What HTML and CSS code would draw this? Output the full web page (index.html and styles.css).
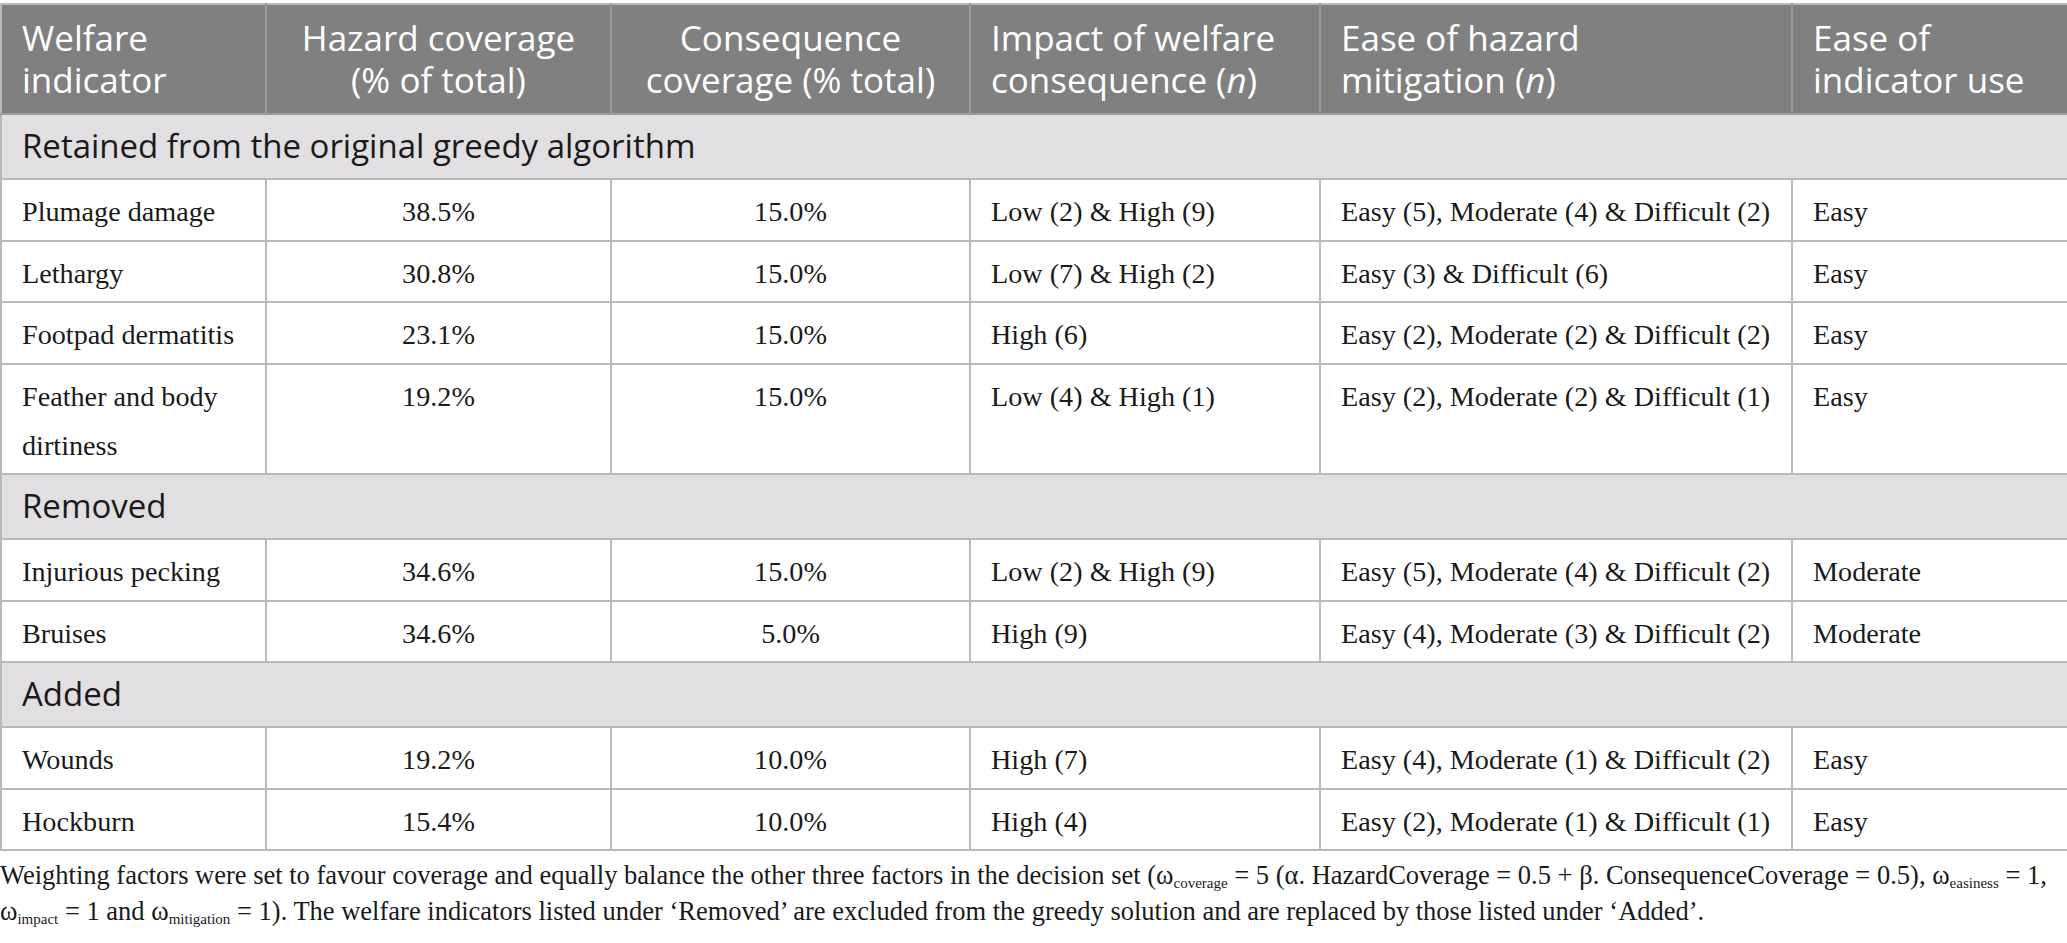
FILE: index.html
```html
<!DOCTYPE html>
<html lang="en">
<head>
<meta charset="utf-8">
<title>Welfare indicators</title>
<link rel="stylesheet" href="styles.css">
</head>
<body>
<div class="wrap">
<table class="tbl">
  <colgroup>
    <col class="c1"><col class="c2"><col class="c3"><col class="c4"><col class="c5"><col class="c6">
  </colgroup>
  <thead>
    <tr>
      <th>Welfare<br>indicator</th>
      <th class="ctr">Hazard coverage<br>(% of total)</th>
      <th class="ctr">Consequence<br>coverage (% total)</th>
      <th>Impact of welfare<br>consequence (<i>n</i>)</th>
      <th>Ease of hazard<br>mitigation (<i>n</i>)</th>
      <th>Ease of<br>indicator use</th>
    </tr>
  </thead>
  <tbody>
    <tr class="band"><td colspan="6">Retained from the original greedy algorithm</td></tr>
    <tr><td>Plumage damage</td><td class="ctr">38.5%</td><td class="ctr">15.0%</td><td>Low (2) &amp; High (9)</td><td>Easy (5), Moderate (4) &amp; Difficult (2)</td><td>Easy</td></tr>
    <tr><td>Lethargy</td><td class="ctr">30.8%</td><td class="ctr">15.0%</td><td>Low (7) &amp; High (2)</td><td>Easy (3) &amp; Difficult (6)</td><td>Easy</td></tr>
    <tr><td>Footpad dermatitis</td><td class="ctr">23.1%</td><td class="ctr">15.0%</td><td>High (6)</td><td>Easy (2), Moderate (2) &amp; Difficult (2)</td><td>Easy</td></tr>
    <tr><td>Feather and body dirtiness</td><td class="ctr">19.2%</td><td class="ctr">15.0%</td><td>Low (4) &amp; High (1)</td><td>Easy (2), Moderate (2) &amp; Difficult (1)</td><td>Easy</td></tr>
    <tr class="band"><td colspan="6">Removed</td></tr>
    <tr><td>Injurious pecking</td><td class="ctr">34.6%</td><td class="ctr">15.0%</td><td>Low (2) &amp; High (9)</td><td>Easy (5), Moderate (4) &amp; Difficult (2)</td><td>Moderate</td></tr>
    <tr><td>Bruises</td><td class="ctr">34.6%</td><td class="ctr">5.0%</td><td>High (9)</td><td>Easy (4), Moderate (3) &amp; Difficult (2)</td><td>Moderate</td></tr>
    <tr class="band"><td colspan="6">Added</td></tr>
    <tr><td>Wounds</td><td class="ctr">19.2%</td><td class="ctr">10.0%</td><td>High (7)</td><td>Easy (4), Moderate (1) &amp; Difficult (2)</td><td>Easy</td></tr>
    <tr><td>Hockburn</td><td class="ctr">15.4%</td><td class="ctr">10.0%</td><td>High (4)</td><td>Easy (2), Moderate (1) &amp; Difficult (1)</td><td>Easy</td></tr>
  </tbody>
</table>
<p class="note">Weighting factors were set to favour coverage and equally balance the other three factors in the decision set (ω<sub>coverage</sub> = 5 (α. HazardCoverage = 0.5 + β. ConsequenceCoverage = 0.5), ω<sub>easiness</sub> = 1,<br>ω<sub>impact</sub> = 1 and ω<sub>mitigation</sub> = 1). The welfare indicators listed under ‘Removed’ are excluded from the greedy solution and are replaced by those listed under ‘Added’.</p>
</div>
</body>
</html>
```
FILE: styles.css
```css
html, body {
  margin: 0;
  padding: 0;
  background: #ffffff;
}
.wrap {
  width: 2067px;
  padding-top: 3px;
}
.tbl {
  width: 2067px;
  border-collapse: collapse;
  table-layout: fixed;
  border: 2px solid #b9b9b9;
}
.c1 { width: 265px; }
.c2 { width: 345px; }
.c3 { width: 359px; }
.c4 { width: 350px; }
.c5 { width: 472px; }
.c6 { width: 276px; }

.tbl th {
  background: #7f807f;
  color: #ffffff;
  font-family: "Open Sans", "Liberation Sans", sans-serif;
  font-weight: 400;
  font-size: 35px;
  line-height: 42px;
  text-align: left;
  vertical-align: top;
  padding: 12px 4px 12px 20px;
  border: 2px solid #9a9a9a;
  border-top-color: #b9b9b9;
  white-space: nowrap;
}
.tbl th.ctr { text-align: center; padding: 12px 4px; }
.tbl th:first-child { border-left-color: #b9b9b9; }
.tbl th:last-child { border-right-color: #b9b9b9; }
.tbl th i { font-style: italic; }
.tbl td {
  font-family: "Liberation Serif", "Times New Roman", serif;
  font-size: 28.2px;
  line-height: 49px;
  color: #1a1a1a;
  padding: 7px 6px 3.5px 20px;
  border: 2px solid #b9b9b9;
  vertical-align: top;
  text-align: left;
}
.tbl td.ctr { text-align: center; padding-left: 12px; padding-right: 12px; }
.tbl tr.band td {
  background: #e1dfe1;
  font-family: "Open Sans", "Liberation Sans", sans-serif;
  font-size: 33px;
  line-height: 44px;
  padding: 9px 20px 10px 20px;
  color: #1a1a1a;
}
.note {
  margin: 6px 0 0 0;
  font-family: "Liberation Serif", "Times New Roman", serif;
  font-size: 26.5px;
  line-height: 36px;
  color: #1a1a1a;
}
.note sub {
  font-size: 15px;
  line-height: 0;
  vertical-align: -4px;
}
```
